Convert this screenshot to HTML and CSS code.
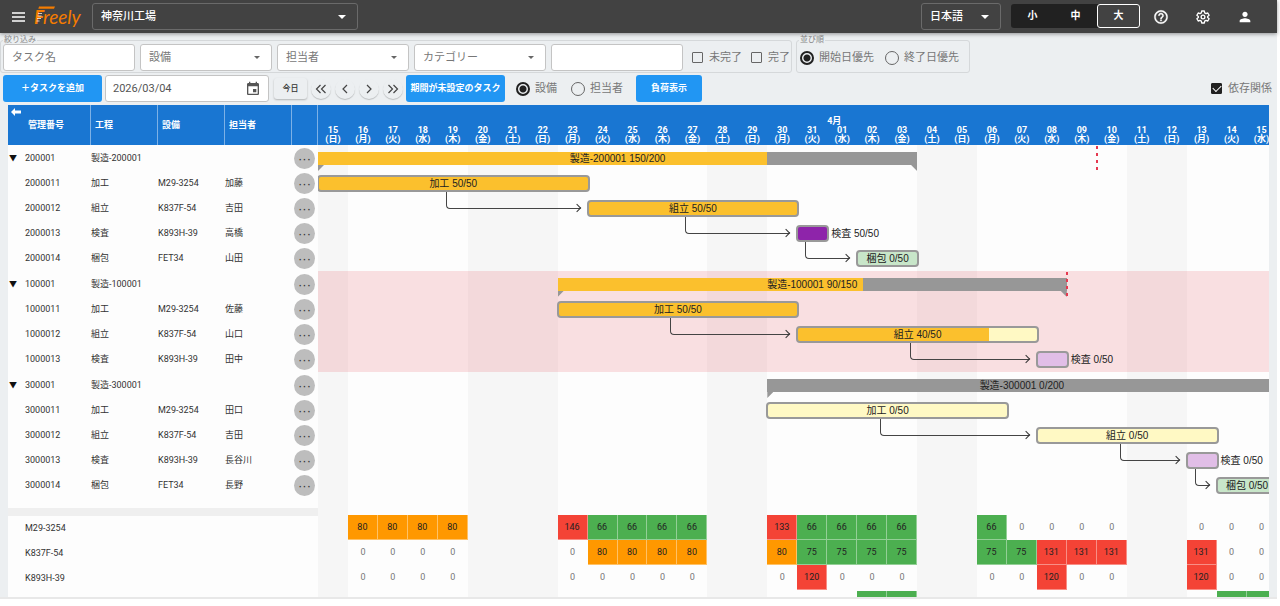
FILE: index.html
```html
<!DOCTYPE html>
<html lang="ja">
<head>
<meta charset="utf-8">
<title>Freely</title>
<link rel="stylesheet" href="styles.css">
</head>
<body>
<header class="appbar">
  <button class="icon-btn" aria-label="メニュー">
    <svg width="14" height="10" viewBox="0 0 14 10"><path d="M0 1h13M0 5h13M0 9h13" stroke="#fff" stroke-width="1.6"/></svg>
  </button>
  <svg class="logo" width="50" height="26" viewBox="0 0 50 26" role="img" aria-label="Freely">
    <path d="M6 2.500h16l-1 2.200H5.300z" fill="#f57c00"/>
    <text x="1" y="20" class="logo-f">F</text>
    <text x="10" y="20" class="logo-text">reely</text>
    <path d="M5 9.500h4M4.500 12h4M4 14.500h4M3.500 17h3" stroke="#fff3e0" stroke-width=".8"/>
  </svg>
  <span class="select select-dark factory"><select aria-label="工場"><option>神奈川工場</option></select></span>
  <span class="spacer"></span>
  <span class="select select-dark language"><select aria-label="言語"><option>日本語</option></select></span>
  <div class="sizes" role="group" aria-label="文字サイズ">
    <button>小</button><button>中</button><button class="active">大</button>
  </div>
  <nav class="tools">
    <button class="icon-btn" aria-label="ヘルプ"><svg width="16" height="16" viewBox="0 0 24 24" fill="#fff" stroke="#fff" stroke-width=".5"><path d="M11 18h2v-2h-2v2zm1-16C6.480 2 2 6.480 2 12s4.480 10 10 10 10-4.480 10-10S17.520 2 12 2zm0 18c-4.410 0-8-3.590-8-8s3.590-8 8-8 8 3.590 8 8-3.590 8-8 8zm0-14c-2.210 0-4 1.790-4 4h2c0-1.100.9-2 2-2s2 .9 2 2c0 2-3 1.750-3 5h2c0-2.250 3-2.500 3-5 0-2.210-1.790-4-4-4z"/></svg></button>
    <button class="icon-btn" aria-label="設定"><svg width="16" height="16" viewBox="0 0 24 24" fill="none" stroke="#fff" stroke-width="2" stroke-linejoin="round"><path d="M10 3h4l.5 2.800 2 1.200 2.700-1 2 3.400-2.200 1.800v1.600l2.200 1.800-2 3.400-2.700-1-2 1.200L14 21h-4l-.5-2.800-2-1.200-2.700 1-2-3.400L5 12.800v-1.600L2.800 9.400l2-3.400 2.700 1 2-1.200z"/><circle cx="12" cy="12" r="2.800"/></svg></button>
    <button class="icon-btn" aria-label="アカウント"><svg width="16" height="16" viewBox="0 0 24 24" fill="#fff"><path d="M12 12c2.210 0 4-1.790 4-4s-1.790-4-4-4-4 1.790-4 4 1.790 4 4 4zm0 2c-2.670 0-8 1.340-8 4v2h16v-2c0-2.660-5.330-4-8-4z"/></svg></button>
  </nav>
</header>

<main class="page">
  <div class="filters">
    <fieldset>
      <legend>絞り込み</legend>
      <div class="fields">
        <input class="field" type="text" placeholder="タスク名" aria-label="タスク名">
        <span class="select"><select aria-label="設備"><option>設備</option></select></span>
        <span class="select"><select aria-label="担当者"><option>担当者</option></select></span>
        <span class="select"><select aria-label="カテゴリー"><option>カテゴリー</option></select></span>
        <input class="field" type="text" aria-label="キーワード">
        <label class="check"><input type="checkbox">未完了</label>
        <label class="check"><input type="checkbox">完了</label>
      </div>
    </fieldset>
    <fieldset>
      <legend>並び順</legend>
      <div class="fields sort">
        <label class="radio"><input type="radio" name="sort" checked>開始日優先</label>
        <label class="radio"><input type="radio" name="sort">終了日優先</label>
      </div>
    </fieldset>
  </div>

  <div class="actions">
    <button class="primary wide">＋タスクを追加</button>
    <div class="date">
      <input type="text" value="2026/03/04" aria-label="日付">
      <button class="icon-btn" aria-label="カレンダー"><svg width="16" height="16" viewBox="0 0 24 24" fill="#555"><path d="M19 3h-1V1h-2v2H8V1H6v2H5c-1.110 0-2 .9-2 2v14c0 1.100.89 2 2 2h14c1.100 0 2-.9 2-2V5c0-1.100-.9-2-2-2zm0 16H5V8h14v11zM12 12h5v5h-5z"/></svg></button>
    </div>
    <div class="pager">
      <button class="today">今日</button>
      <button class="round" aria-label="前月"><svg width="12" height="10" viewBox="0 0 12 10"><path d="M5.500 1l-4 4 4 4M10.500 1l-4 4 4 4"/></svg></button>
      <button class="round" aria-label="前日"><svg width="12" height="10" viewBox="0 0 12 10"><path d="M8 1L4 5l4 4"/></svg></button>
      <button class="round" aria-label="翌日"><svg width="12" height="10" viewBox="0 0 12 10"><path d="M4 1l4 4-4 4"/></svg></button>
      <button class="round" aria-label="翌月"><svg width="12" height="10" viewBox="0 0 12 10"><path d="M1.500 1l4 4-4 4M6.500 1l4 4-4 4"/></svg></button>
    </div>
    <button class="primary wide">期間が未設定のタスク</button>
    <div class="target">
      <label class="radio"><input type="radio" name="target" checked>設備</label>
      <label class="radio"><input type="radio" name="target">担当者</label>
    </div>
    <button class="primary">負荷表示</button>
    <span class="spacer"></span>
    <label class="check"><input type="checkbox" checked>依存関係</label>
  </div>

  <section class="board">
    <div class="side">
      <button class="collapse" aria-label="閉じる"><svg width="10" height="8" viewBox="0 0 10 8"><path d="M0 4l4-4v2.500h6v3H4V8z" fill="#fff"/></svg></button>
      <table class="tasks">
        <colgroup><col class="c-id"><col class="c-name"><col class="c-name"><col class="c-name"><col></colgroup>
        <thead><tr><th>管理番号</th><th>工程</th><th>設備</th><th>担当者</th><th></th></tr></thead>
        <tbody>
          <tr><td><button class="toggle">▼</button>200001</td><td colspan="3">製造-200001</td><td><button class="more">···</button></td></tr>
          <tr><td>2000011</td><td>加工</td><td>M29-3254</td><td>加藤</td><td><button class="more">···</button></td></tr>
          <tr><td>2000012</td><td>組立</td><td>K837F-54</td><td>吉田</td><td><button class="more">···</button></td></tr>
          <tr><td>2000013</td><td>検査</td><td>K893H-39</td><td>高橋</td><td><button class="more">···</button></td></tr>
          <tr><td>2000014</td><td>梱包</td><td>FET34</td><td>山田</td><td><button class="more">···</button></td></tr>
        </tbody>
        <tbody>
          <tr><td><button class="toggle">▼</button>100001</td><td colspan="3">製造-100001</td><td><button class="more">···</button></td></tr>
          <tr><td>1000011</td><td>加工</td><td>M29-3254</td><td>佐藤</td><td><button class="more">···</button></td></tr>
          <tr><td>1000012</td><td>組立</td><td>K837F-54</td><td>山口</td><td><button class="more">···</button></td></tr>
          <tr><td>1000013</td><td>検査</td><td>K893H-39</td><td>田中</td><td><button class="more">···</button></td></tr>
        </tbody>
        <tbody>
          <tr><td><button class="toggle">▼</button>300001</td><td colspan="3">製造-300001</td><td><button class="more">···</button></td></tr>
          <tr><td>3000011</td><td>加工</td><td>M29-3254</td><td>田口</td><td><button class="more">···</button></td></tr>
          <tr><td>3000012</td><td>組立</td><td>K837F-54</td><td>吉田</td><td><button class="more">···</button></td></tr>
          <tr><td>3000013</td><td>検査</td><td>K893H-39</td><td>長谷川</td><td><button class="more">···</button></td></tr>
          <tr><td>3000014</td><td>梱包</td><td>FET34</td><td>長野</td><td><button class="more">···</button></td></tr>
        </tbody>
      </table>
      <div class="divider"></div>
      <ul class="machines"><li>M29-3254</li><li>K837F-54</li><li>K893H-39</li></ul>
    </div>
    <div class="chart">
      <div class="canvas">
        <div class="days" id="days"></div>
        <div class="plot">
          <div class="shades" id="shades"></div>
          <div class="lanes" id="lanes"></div>
          <table class="load"><tbody id="load"></tbody></table>
        </div>
      </div>
    </div>
  </section>
</main>
<script src="chart.js"></script>
</body>
</html>
```

FILE: styles.css
```css
* { box-sizing: border-box; }

body {
  margin: 0;
  padding-right: 3px;
  background: #fff;
  color: #333;
  font: 11px/1.2 Roboto, "Noto Sans CJK JP", sans-serif;
}

button, input, select { font: inherit; color: inherit; margin: 0; padding: 0; border: 0; background: none; }
.spacer { flex: 1; }
.icon-btn { display: flex; align-items: center; justify-content: center; }

/* app bar */
.appbar {
  position: relative;
  display: flex;
  align-items: center;
  height: 33px;
  padding: 0 12px;
  background: #424242;
  color: #fff;
  box-shadow: 0 1px 4px rgba(0, 0, 0, .4);
}
.logo { margin: 0 9px 0 7px; }
.logo-f { font: italic 700 19px Lato, sans-serif; fill: #f57c00; }
.logo-text { font: italic 400 19px Lato, sans-serif; fill: #f57c00; }

.select { position: relative; display: block; width: 132px; height: 27px; }
.select select {
  appearance: none;
  width: 100%;
  height: 100%;
  padding: 0 24px 0 8px;
  border: 1px solid #c4c4c4;
  border-radius: 3px;
  background: #fff;
  color: #777;
}
.select::after {
  content: "";
  position: absolute;
  top: 12px;
  right: 12px;
  border: 3px solid transparent;
  border-top-color: #666;
  pointer-events: none;
}
.select-dark select { background: transparent; border-color: #6a6a6a; color: #fff; font-weight: 500; }
.select-dark::after { border-top-color: #fff; border-width: 4px; }
.factory { width: 266px; }
.language { width: 80px; }

.sizes { display: flex; align-items: center; height: 24px; margin: 0 13px 2px 10px; background: #212121; border-radius: 3px; }
.sizes button { width: 43px; height: 24px; border-radius: 3px; font-size: 10px; font-weight: 700; }
.sizes .active { background: #424242; border: 1px solid #fff; }
.tools { display: flex; gap: 26px; padding-right: 12px; }

/* toolbar */
.page { background: #eceff1; border-bottom: 2px solid #e8e8e8; }
.filters { display: flex; gap: 4px; padding-top: 3px; }
fieldset { min-width: 0; margin: 0; padding: 0 1px 1px 2px; border: 1px solid #d5d8da; border-radius: 3px; }
legend { height: 8px; padding: 0 1px; font-size: 8px; line-height: 8px; color: #888; }
.fields { display: flex; align-items: center; gap: 5px; height: 27px; }
.field { width: 132px; height: 27px; padding: 0 8px; border: 1px solid #c4c4c4; border-radius: 3px; background: #fff; }
.field::placeholder { color: #777; opacity: 1; }
.check, .radio { display: flex; align-items: center; gap: 6px; color: #777; white-space: nowrap; }
.radio { gap: 5px; }
.check { padding-left: 4px; }
.check input { appearance: none; display: grid; place-items: center; width: 11px; height: 11px; border: 1px solid #666; border-radius: 1px; }
.check input:checked { background: #212121; border-color: #212121; }
.check input:checked::before { content: ""; width: 7px; height: 4px; margin-bottom: 2px; border: solid #fff; border-width: 0 0 1px 1px; rotate: -45deg; }
.radio input { appearance: none; width: 14px; height: 14px; border: 1px solid #666; border-radius: 50%; }
.radio input:checked { border: 2px solid #212121; background: radial-gradient(circle, #212121 3px, transparent 4px); }
.sort { gap: 11px; padding: 0 9px 0 1px; }

.actions { display: flex; align-items: center; padding: 2px 5px 3px 3px; }
.primary { min-width: 66px; height: 27px; border-radius: 3px; background: #2196f3; color: #fff; font-size: 9px; font-weight: 700; white-space: nowrap; }
.primary.wide { min-width: 99px; }
.date { display: flex; align-items: center; width: 164px; height: 27px; margin: 0 5px 0 3px; padding: 0 7px; border: 1px solid #c4c4c4; border-radius: 3px; background: #fff; }
.date input { flex: 1; min-width: 0; color: #555; }
.pager { display: flex; align-items: center; gap: 4px; margin-right: 3px; }
.today { width: 33px; height: 21px; border-radius: 3px; font-size: 8px; font-weight: 500; box-shadow: 0 1px 2px rgba(0, 0, 0, .25); }
.round { display: flex; align-items: center; justify-content: center; width: 20px; height: 20px; border-radius: 50%; box-shadow: 0 1px 1px rgba(0, 0, 0, .2); }
.round path { fill: none; stroke: #444; stroke-width: 1.200; }
.target { display: flex; gap: 14px; margin: 0 13px 0 11px; }

/* board */
.board { display: flex; padding: 0 8px; }
.side { position: relative; flex: none; width: 310px; background: #fdfdfd; }
.collapse { position: absolute; top: 3px; left: 3px; line-height: 0; }
.tasks { width: 100%; table-layout: fixed; border-collapse: separate; border-spacing: 0; font-size: 9px; }
.c-id { width: 83px; }
.c-name { width: 67px; }
.tasks th { height: 40px; padding: 0 4px; background: #1976d2; border-right: 1px solid #7db1e6; color: #fff; font-weight: 700; text-align: left; }
.tasks th:first-child { padding-left: 20px; }
.tasks td { height: 25px; padding: 0; }
.tasks td:first-child { padding-left: 17px; }
.tasks td:last-child { padding-left: 2px; line-height: 0; }
.tasks tbody tr:first-child td { height: 26px; padding-top: 1px; }
.toggle { width: 10px; margin: 0 7px 0 -17px; font-size: 8px; color: #111; }
.more { width: 21px; height: 21px; border-radius: 50%; background: #bdbdbd; font-family: "Liberation Sans", sans-serif; font-size: 13px; line-height: 21px; color: #333; }
.divider { height: 8px; margin-top: 10px; background: #efefef; }
.machines { margin: 0; padding: 0 0 6px 17px; list-style: none; font-size: 9px; }
.machines li { display: flex; align-items: center; height: 25px; }

.chart { flex: 1; min-width: 0; overflow: hidden; background: #fdfdfd; }
.canvas { display: flex; flex-direction: column; width: calc(100% * 128 / 127); height: 100%; }
.days { display: grid; grid-template-columns: repeat(32, 1fr); height: 40px; background: #1976d2; color: #fff; font-size: 9px; font-weight: 700; line-height: 9px; text-align: center; }
.day { display: flex; flex-direction: column; justify-content: flex-end; padding-bottom: 1px; }
.day .month { text-align: left; }
.plot { position: relative; flex: 1; }
.shades { position: absolute; inset: 0; display: grid; grid-template-columns: repeat(32, 1fr); }
.shades i { grid-row: 1; background: #f6f6f6; }
.lanes { position: relative; font-family: "Liberation Sans", "Noto Sans CJK JP", sans-serif; font-size: 10px; color: #222; }
.group { padding-top: 1px; }
.group.late { background: rgba(229, 57, 70, .15); }
.lane { display: grid; grid-template: 25px / repeat(64, 1fr); align-items: center; }
.lane > * { grid-row: 1; }
.bar { display: flex; align-items: center; justify-content: center; height: 17px; margin: 0 -2px 0 -1px; border: 2px solid #999; border-radius: 4px; white-space: nowrap; }
.outside { padding-left: 4px; white-space: nowrap; }
.summary { position: relative; display: flex; align-items: center; justify-content: center; height: 13px; color: #222; }
.summary::before, .summary::after { content: ""; position: absolute; top: 100%; width: 6px; height: 6px; background: #979797; }
.summary::before { left: 0; clip-path: polygon(0 0, 100% 0, 0 100%); }
.summary::after { right: 0; clip-path: polygon(0 0, 100% 0, 100% 100%); }
.deadline { position: relative; align-self: start; width: 2px; height: 24px; margin-left: -1px; background: repeating-linear-gradient(#e53950 0 3px, transparent 3px 7px); }
.link { position: relative; align-self: start; height: 17px; margin: 21px 8px 0 -7px; border: solid #444; border-width: 0 0 1px 1px; border-bottom-left-radius: 4px; }
.link::after { content: ""; position: absolute; right: 0; bottom: -3px; width: 5px; height: 5px; border: solid #333; border-width: 1px 1px 0 0; rotate: 45deg; }

.load { position: relative; display: block; height: 82px; margin-top: 17px; overflow: hidden; font-size: 9px; }
.load tbody { display: block; }
.load tr { display: grid; grid-template: 25px / repeat(32, 1fr); }
.load tr:last-child { margin-top: 1px; }
.load td { display: flex; align-items: center; justify-content: center; padding: 0; color: #777; }
.load .ok, .load .warn, .load .over { color: #222; border: solid rgba(255, 255, 255, .4); border-width: 0 1px 1px 0; }
.load .ok { background: #4caf50; }
.load .warn { background: #ff9800; }
.load .over { background: #f44336; }
```

FILE: chart.js
```js
const week = "日月火水木金土";
const days = document.getElementById("days");
const shades = document.getElementById("shades");
const off = [0, 5, 6, 7, 13, 14, 20, 21, 27, 28];

for (let i = 0; i < 32; i++) {
  const date = new Date(2026, 2, 15 + i);
  const dd = String(date.getDate()).padStart(2, "0");
  const month = dd === "01" ? '<span class="month">4月</span>' : "";
  days.insertAdjacentHTML("beforeend",
    `<div class="day">${month}<span>${dd}</span><span>(${week[i % 7]})</span></div>`);
}
for (const d of off) {
  shades.insertAdjacentHTML("beforeend", `<i style="grid-column:${d + 1}"></i>`);
}

// Each task: name, first day, end day, done, planned, [done colour, planned colour].
const Y = ["#fbc02d", "#fff9c4"], P = ["#8e24aa", "#e1bee7"], G = ["#43a047", "#c8e6c9"];
const groups = [
  { name: "製造-200001", from: 0, to: 20, done: 150, total: 200, due: 26, tasks: [
    ["加工", 0, 9, 50, 50, Y], ["組立", 9, 16, 50, 50, Y], ["検査", 16, 17, 50, 50, P], ["梱包", 18, 20, 0, 50, G]] },
  { name: "製造-100001", from: 8, to: 25, done: 90, total: 150, due: 25, late: true, tasks: [
    ["加工", 8, 16, 50, 50, Y], ["組立", 16, 24, 40, 50, Y], ["検査", 24, 25, 0, 50, P]] },
  { name: "製造-300001", from: 15, to: 32, done: 0, total: 200, tasks: [
    ["加工", 15, 23, 0, 50, Y], ["組立", 24, 30, 0, 50, Y], ["検査", 29, 30, 0, 50, P], ["梱包", 30, 32, 0, 50, G]] },
];
const span = (a, b) => `grid-column:${a * 2 + 1}/${b * 2 + 1}`;
const fill = (done, total, a, b) => {
  const p = done / total * 100;
  return `background:linear-gradient(90deg,${a} ${p}%,${b} ${p}%)`;
};
let html = "";
for (const g of groups) {
  html += `<div class="group${g.late ? " late" : ""}"><div class="lane">`;
  html += `<div class="summary" style="${span(g.from, g.to)};${fill(g.done, g.total, "#fbc02d", "#979797")}">${g.name} ${g.done}/${g.total}</div>`;
  if (g.due) html += `<div class="deadline" style="${span(g.due, g.due + 1)}"></div>`;
  html += "</div>";
  g.tasks.forEach(([name, a, b, done, total, c], i) => {
    const label = `${name} ${done}/${total}`;
    const small = b - a < 2;
    html += `<div class="lane"><div class="bar" style="${span(a, b)};${fill(done, total, c[0], c[1])}">${small ? "" : label}</div>`;
    if (small) html += `<span class="outside" style="${span(b, b + 2)}">${label}</span>`;
    const next = g.tasks[i + 1];
    if (next) html += `<div class="link" style="${span((a + b) / 2, next[1])}"></div>`;
    html += "</div>";
  });
  html += "</div>";
}
document.getElementById("lanes").innerHTML = html;

const _ = null;
const load = [
  [_, 80, 80, 80, 80, _, _, _, 146, 66, 66, 66, 66, _, _, 133, 66, 66, 66, 66, _, _, 66, 0, 0, 0, 0, _, _, 0, 0, 0],
  [_, 0, 0, 0, 0, _, _, _, 0, 80, 80, 80, 80, _, _, 80, 75, 75, 75, 75, _, _, 75, 75, 131, 131, 131, _, _, 131, 0, 0],
  [_, 0, 0, 0, 0, _, _, _, 0, 0, 0, 0, 0, _, _, 0, 120, 0, 0, 0, _, _, 0, 0, 120, 0, 0, _, _, 120, 0, 0],
];
const level = v => !v ? "" : v > 100 ? "over" : v >= 80 ? "warn" : "ok";
const rows = load.map(r => "<tr>" + r.map(v => `<td class="${level(v)}">${v ?? ""}</td>`).join("") + "</tr>");
const partial = [18, 19, 30, 31];
rows.push("<tr>" + Array.from({ length: 32 }, (x, i) => `<td class="${partial.includes(i) ? "ok" : ""}"></td>`).join("") + "</tr>");
document.getElementById("load").innerHTML = rows.join("");
```
